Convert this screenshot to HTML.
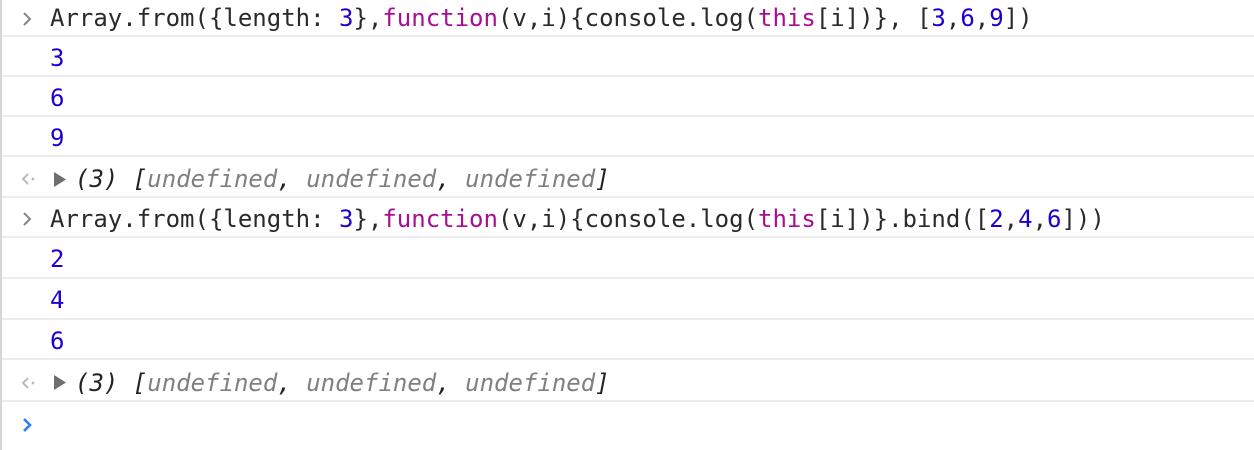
<!DOCTYPE html>
<html><head><style>
body{margin:0;width:1254px;height:450px;background:#fff;overflow:hidden;position:relative;font-family:"DejaVu Sans Mono","Liberation Mono",monospace;font-size:24px;color:#2a2a2a}
.lb{position:absolute;left:0;top:0;width:2px;height:450px;background:#d6d6d6}
.r{position:absolute;left:2px;right:0;border-bottom:2px solid #ececec;white-space:pre}
.t{position:absolute;left:48px;top:3px;bottom:0;display:flex;align-items:center}
.n{color:#1c00cf}
.k{color:#aa0d91}
.u{color:#808080;font-style:italic}
.i{font-style:italic;color:#222}
.p{position:absolute;left:18px;top:3px;bottom:0;display:flex;align-items:center}
</style></head><body>
<div class="lb"></div>
<div class="r" style="top:0;height:35px"><div class="p"><svg width="14" height="16" viewBox="0 0 14 16"><path d="M4 2l6 6-6 6" fill="none" stroke="#888" stroke-width="2"/></svg></div><div class="t" style="top:1px">Array.from({length: <span class="n">3</span>},<span class="k">function</span>(v,i){console.log(<span class="k">this</span>[i])}, [<span class="n">3</span>,<span class="n">6</span>,<span class="n">9</span>])</div></div>
<div class="r n" style="top:37px;height:38px"><div class="t">3</div></div>
<div class="r n" style="top:77px;height:38px"><div class="t">6</div></div>
<div class="r n" style="top:117px;height:38px"><div class="t">9</div></div>
<div class="r" style="top:157px;height:39px"><div class="p" style="top:5px"><svg width="16" height="14" viewBox="0 0 16 14"><path d="M8 2l-5 5 5 5" fill="none" stroke="#bbb" stroke-width="2"/><circle cx="13" cy="7" r="1.4" fill="#bbb"/></svg></div><div class="t" style="left:52px;top:5px"><svg width="13" height="17" viewBox="0 0 13 17" style="margin-right:8px"><path d="M0 1l12 7.5-12 7.5z" fill="#6e6e6e"/></svg><span class="i">(3) [<span class="u">undefined</span>, <span class="u">undefined</span>, <span class="u">undefined</span>]</span></div></div>
<div class="r" style="top:198px;height:38px"><div class="p"><svg width="14" height="16" viewBox="0 0 14 16"><path d="M4 2l6 6-6 6" fill="none" stroke="#888" stroke-width="2"/></svg></div><div class="t">Array.from({length: <span class="n">3</span>},<span class="k">function</span>(v,i){console.log(<span class="k">this</span>[i])}.bind([<span class="n">2</span>,<span class="n">4</span>,<span class="n">6</span>]))</div></div>
<div class="r n" style="top:238px;height:39px"><div class="t">2</div></div>
<div class="r n" style="top:279px;height:39px"><div class="t">4</div></div>
<div class="r n" style="top:320px;height:38px"><div class="t">6</div></div>
<div class="r" style="top:360px;height:40px"><div class="p" style="top:5px"><svg width="16" height="14" viewBox="0 0 16 14"><path d="M8 2l-5 5 5 5" fill="none" stroke="#bbb" stroke-width="2"/><circle cx="13" cy="7" r="1.4" fill="#bbb"/></svg></div><div class="t" style="left:52px;top:5px"><svg width="13" height="17" viewBox="0 0 13 17" style="margin-right:8px"><path d="M0 1l12 7.5-12 7.5z" fill="#6e6e6e"/></svg><span class="i">(3) [<span class="u">undefined</span>, <span class="u">undefined</span>, <span class="u">undefined</span>]</span></div></div>
<div class="r" style="top:402px;height:42px;border:none"><div class="p"><svg width="14" height="16" viewBox="0 0 14 16"><path d="M4 2l6 6-6 6" fill="none" stroke="#2d7cf6" stroke-width="2.6"/></svg></div></div>
</body></html>
